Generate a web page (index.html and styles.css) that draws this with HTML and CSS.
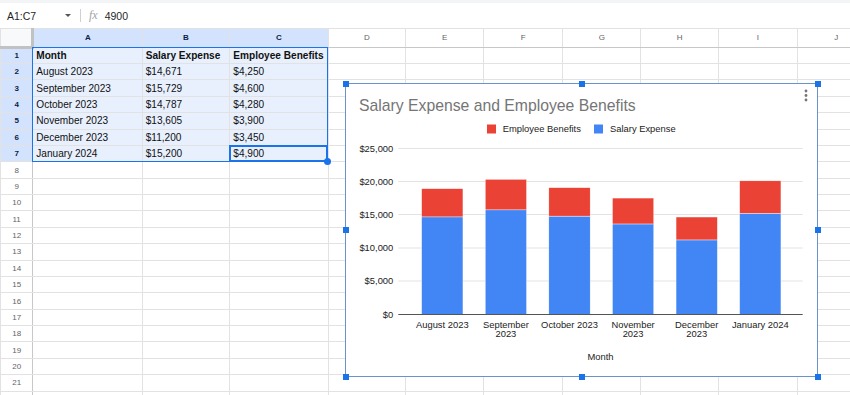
FILE: index.html
```html
<!DOCTYPE html>
<html>
<head>
  <meta charset="UTF-8">
  <title>Salary Expense and Employee Benefits</title>
  <link rel="stylesheet" href="styles.css">
</head>
<body>
  <!-- Formula bar -->
  <div class="toolbar">
    <span class="namebox">A1:C7</span>
    <span class="caret"></span>
    <span class="divider"></span>
    <span class="fx">fx</span>
    <span class="formula">4900</span>
  </div>

  <div class="sheet-wrap">
    <table class="grid">
      <colgroup>
        <col class="c-rh"><col class="c-a"><col class="c-b"><col class="c-c"><col class="c-d"><col class="c-e">
        <col class="c-f"><col class="c-g"><col class="c-h"><col class="c-i"><col class="c-j">
      </colgroup>
      <thead>
        <tr>
          <th class="corner"></th>
          <th class="on">A</th><th class="on">B</th><th class="on">C</th>
          <th>D</th><th>E</th><th>F</th><th>G</th><th>H</th><th>I</th><th>J</th>
        </tr>
      </thead>
      <tbody>
        <tr><th class="on">1</th><td class="s b">Month</td><td class="s b">Salary Expense</td><td class="s b">Employee Benefits</td><td></td><td></td><td></td><td></td><td></td><td></td><td></td></tr>
        <tr><th class="on">2</th><td class="s">August 2023</td><td class="s">$14,671</td><td class="s">$4,250</td><td></td><td></td><td></td><td></td><td></td><td></td><td></td></tr>
        <tr><th class="on">3</th><td class="s">September 2023</td><td class="s">$15,729</td><td class="s">$4,600</td><td></td><td></td><td></td><td></td><td></td><td></td><td></td></tr>
        <tr><th class="on">4</th><td class="s">October 2023</td><td class="s">$14,787</td><td class="s">$4,280</td><td></td><td></td><td></td><td></td><td></td><td></td><td></td></tr>
        <tr><th class="on">5</th><td class="s">November 2023</td><td class="s">$13,605</td><td class="s">$3,900</td><td></td><td></td><td></td><td></td><td></td><td></td><td></td></tr>
        <tr><th class="on">6</th><td class="s">December 2023</td><td class="s">$11,200</td><td class="s">$3,450</td><td></td><td></td><td></td><td></td><td></td><td></td><td></td></tr>
        <tr><th class="on">7</th><td class="s">January 2024</td><td class="s">$15,200</td><td class="s">$4,900</td><td></td><td></td><td></td><td></td><td></td><td></td><td></td></tr>
        <tr><th>8</th><td></td><td></td><td></td><td></td><td></td><td></td><td></td><td></td><td></td><td></td></tr>
        <tr><th>9</th><td></td><td></td><td></td><td></td><td></td><td></td><td></td><td></td><td></td><td></td></tr>
        <tr><th>10</th><td></td><td></td><td></td><td></td><td></td><td></td><td></td><td></td><td></td><td></td></tr>
        <tr><th>11</th><td></td><td></td><td></td><td></td><td></td><td></td><td></td><td></td><td></td><td></td></tr>
        <tr><th>12</th><td></td><td></td><td></td><td></td><td></td><td></td><td></td><td></td><td></td><td></td></tr>
        <tr><th>13</th><td></td><td></td><td></td><td></td><td></td><td></td><td></td><td></td><td></td><td></td></tr>
        <tr><th>14</th><td></td><td></td><td></td><td></td><td></td><td></td><td></td><td></td><td></td><td></td></tr>
        <tr><th>15</th><td></td><td></td><td></td><td></td><td></td><td></td><td></td><td></td><td></td><td></td></tr>
        <tr><th>16</th><td></td><td></td><td></td><td></td><td></td><td></td><td></td><td></td><td></td><td></td></tr>
        <tr><th>17</th><td></td><td></td><td></td><td></td><td></td><td></td><td></td><td></td><td></td><td></td></tr>
        <tr><th>18</th><td></td><td></td><td></td><td></td><td></td><td></td><td></td><td></td><td></td><td></td></tr>
        <tr><th>19</th><td></td><td></td><td></td><td></td><td></td><td></td><td></td><td></td><td></td><td></td></tr>
        <tr><th>20</th><td></td><td></td><td></td><td></td><td></td><td></td><td></td><td></td><td></td><td></td></tr>
        <tr><th>21</th><td></td><td></td><td></td><td></td><td></td><td></td><td></td><td></td><td></td><td></td></tr>
        <tr><th></th><td></td><td></td><td></td><td></td><td></td><td></td><td></td><td></td><td></td><td></td></tr>
      </tbody>
    </table>

    <!-- selection A1:C7, active cell C7 -->
    <div class="range"></div>
    <div class="active"></div>
    <div class="fill-handle"></div>

    <!-- Chart object -->
    <div class="chart">
      <svg class="chart-svg" width="471" height="292" viewBox="0 0 471 292">
        <text class="title" x="13" y="26.5">Salary Expense and Employee Benefits</text>
        <circle cx="460" cy="7" r="1.4" fill="#757575"/>
        <circle cx="460" cy="11.5" r="1.4" fill="#757575"/>
        <circle cx="460" cy="16" r="1.4" fill="#757575"/>

        <rect x="141" y="40.5" width="9" height="9" fill="#ea4335"/>
        <text class="lbl" x="156.7" y="47.8">Employee Benefits</text>
        <rect x="248" y="40.5" width="9" height="9" fill="#4285f4"/>
        <text class="lbl" x="264" y="47.8">Salary Expense</text>

        <g stroke="#e3e3e3" stroke-width="1">
          <line x1="52.3" y1="64.5" x2="456.7" y2="64.5"/>
          <line x1="52.3" y1="97.5" x2="456.7" y2="97.5"/>
          <line x1="52.3" y1="130.5" x2="456.7" y2="130.5"/>
          <line x1="52.3" y1="164" x2="456.7" y2="164"/>
          <line x1="52.3" y1="197" x2="456.7" y2="197"/>
        </g>

        <g class="lbl" text-anchor="end">
          <text x="47.3" y="67.6">$25,000</text>
          <text x="47.3" y="100.8">$20,000</text>
          <text x="47.3" y="134">$15,000</text>
          <text x="47.3" y="167.2">$10,000</text>
          <text x="47.3" y="200.4">$5,000</text>
          <text x="47.3" y="233.6">$0</text>
        </g>

        <g stroke="#fff" stroke-width="0.4">
          <rect x="75.65" y="132.89" width="41.3" height="97.41" fill="#4285f4"/>
          <rect x="75.65" y="104.67" width="41.3" height="28.22" fill="#ea4335"/>
          <rect x="139.25" y="125.86" width="41.3" height="104.44" fill="#4285f4"/>
          <rect x="139.25" y="95.32" width="41.3" height="30.54" fill="#ea4335"/>
          <rect x="202.85" y="132.11" width="41.3" height="98.19" fill="#4285f4"/>
          <rect x="202.85" y="103.69" width="41.3" height="28.42" fill="#ea4335"/>
          <rect x="266.45" y="139.96" width="41.3" height="90.34" fill="#4285f4"/>
          <rect x="266.45" y="114.06" width="41.3" height="25.9" fill="#ea4335"/>
          <rect x="330.05" y="155.93" width="41.3" height="74.37" fill="#4285f4"/>
          <rect x="330.05" y="133.02" width="41.3" height="22.91" fill="#ea4335"/>
          <rect x="393.65" y="129.37" width="41.3" height="100.93" fill="#4285f4"/>
          <rect x="393.65" y="96.83" width="41.3" height="32.54" fill="#ea4335"/>
        </g>
        <line x1="52.3" y1="230.5" x2="456.7" y2="230.5" stroke="#555" stroke-width="1"/>

        <g class="lbl" text-anchor="middle">
          <text x="96.3" y="243.6">August 2023</text>
          <text x="159.9" y="243.6">September</text>
          <text x="159.9" y="253.4">2023</text>
          <text x="223.5" y="243.6">October 2023</text>
          <text x="287.1" y="243.6">November</text>
          <text x="287.1" y="253.4">2023</text>
          <text x="350.7" y="243.6">December</text>
          <text x="350.7" y="253.4">2023</text>
          <text x="414.3" y="243.6">January 2024</text>
          <text x="254.5" y="276">Month</text>
        </g>
      </svg>
      <span class="knob k-tl"></span><span class="knob k-tm"></span><span class="knob k-tr"></span>
      <span class="knob k-ml"></span><span class="knob k-mr"></span>
      <span class="knob k-bl"></span><span class="knob k-bm"></span><span class="knob k-br"></span>
    </div>
  </div>
</body>
</html>
```

FILE: styles.css
```css
body { margin: 0; width: 850px; height: 395px; overflow: hidden; background: #fff; font-family: "Liberation Sans", Arial, sans-serif; color: #1f1f1f; }

/* formula bar */
.toolbar { height: 28px; box-sizing: border-box; border-top: 3px solid #f3f4f5; display: flex; align-items: center; font-size: 10.5px; }
.namebox { width: 58px; padding-left: 7px; box-sizing: content-box; }
.caret { width: 0; height: 0; border-left: 3px solid transparent; border-right: 3px solid transparent; border-top: 3px solid #555; margin-right: 9px; }
.divider { width: 1px; height: 13px; background: #d0d0d0; margin-right: 8px; }
.fx { font-family: "Liberation Serif", serif; font-style: italic; font-size: 12px; color: #a0a4a8; margin-right: 7px; }
.formula { color: #1f1f1f; }

/* grid */
.sheet-wrap { position: relative; }
.grid { border-collapse: collapse; table-layout: fixed; width: 874.7px; }
.c-rh { width: 32.3px; }
.c-a { width: 109.4px; }
.c-b { width: 87.6px; }
.c-c { width: 98.4px; }
.c-d { width: 77.6px; }
.c-e { width: 78px; }
.c-f { width: 79px; }
.c-g { width: 78px; }
.c-h { width: 77.7px; }
.c-i { width: 78.7px; }
.c-j { width: 78px; }
.grid tbody tr { height: 16.38px; }
.grid thead tr { height: 18.7px; }
.grid td, .grid th { border: 1px solid #e2e2e2; padding: 0 0 0 3px; white-space: nowrap; overflow: hidden; }
.grid td { font-size: 10.1px; color: #111; }
.grid th { font-size: 8px; font-weight: normal; color: #5f6368; text-align: center; padding: 0; }
.grid thead th { border-bottom: 1px solid #c7c7c7; }
.grid tbody th { border-right: 1px solid #c7c7c7; }
.grid th.on { background: #d3e3fd; color: #0b1f44; font-weight: bold; }
.grid th.corner { background: #f8f9fa; border-right: 3px solid #c2c2c2; border-bottom: 3px solid #c2c2c2; }
.grid td.s { background: #e8f0fe; }
.grid td.b { font-weight: bold; }

.range { position: absolute; left: 32.3px; top: 18.7px; width: 295.4px; height: 115px; border: 1px solid #1a73e8; box-sizing: border-box; }
.active { position: absolute; left: 229.3px; top: 117px; width: 98.4px; height: 16.7px; border: 2px solid #1a73e8; box-sizing: border-box; }
.fill-handle { position: absolute; left: 324px; top: 130.2px; width: 7px; height: 7px; border-radius: 50%; background: #1a73e8; }

/* chart */
.chart { position: absolute; left: 345px; top: 55px; width: 473px; height: 294px; box-sizing: border-box; border: 1px solid #6a93cc; background: #fff; }
.chart-svg { position: absolute; left: 0; top: 0; font-family: "Liberation Sans", Arial, sans-serif; }
.title { font-size: 15.75px; fill: #757575; }
.lbl { font-size: 9.4px; fill: #222; }
.knob { position: absolute; width: 6px; height: 6px; background: #1a73e8; }
.k-tl { left: -3.5px; top: -3.5px; }
.k-tm { left: calc(50% - 3px); top: -3.5px; }
.k-tr { right: -3.5px; top: -3.5px; }
.k-ml { left: -3.5px; top: calc(50% - 3px); }
.k-mr { right: -3.5px; top: calc(50% - 3px); }
.k-bl { left: -3.5px; bottom: -3.5px; }
.k-bm { left: calc(50% - 3px); bottom: -3.5px; }
.k-br { right: -3.5px; bottom: -3.5px; }
```
